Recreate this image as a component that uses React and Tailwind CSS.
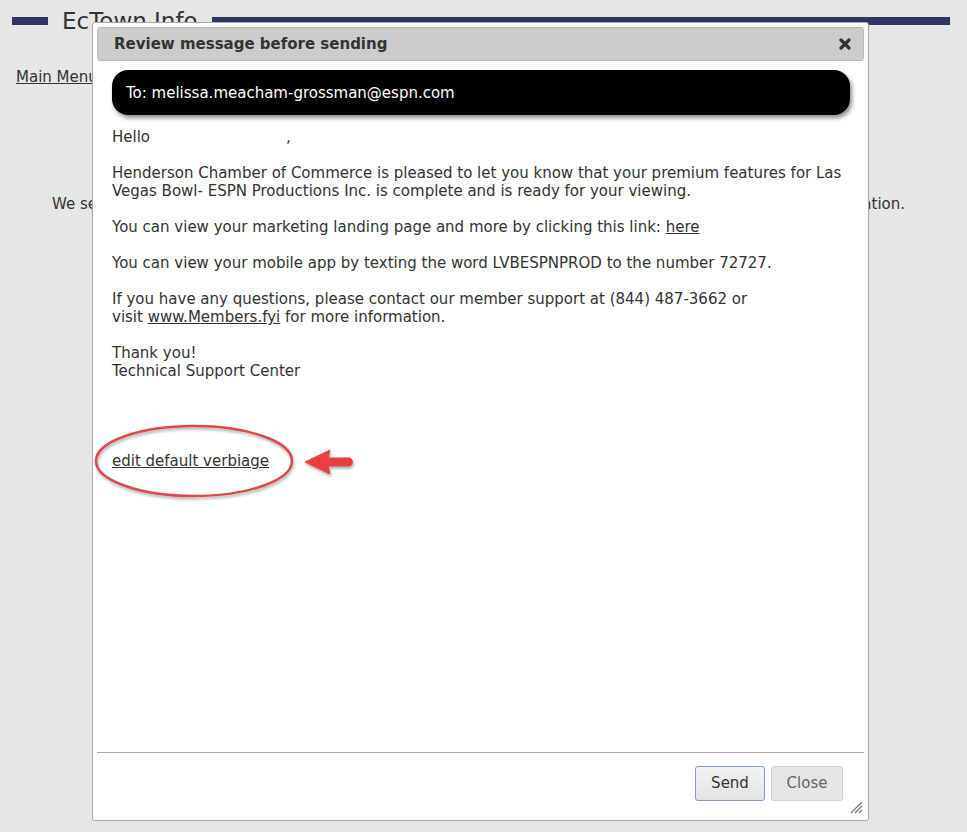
export default function App() {
  return (
    <div className="relative min-h-[832px] w-full overflow-hidden bg-[#e6e6e6] font-['DejaVu_Sans',Verdana,sans-serif] text-[#333]">
      {/* page behind the dialog */}
      <div className="flex items-center gap-[14px] pl-3 pr-[17px] pt-[9px]">
        <div className="h-2 w-9 bg-[#2f3661]" />
        <h1 className="text-[23px] leading-[24px] text-[#333]">EcTown Info</h1>
        <div className="h-2 flex-1 bg-[#2f3661]" />
      </div>
      <div className="pl-4 pt-[32px]">
        <a href="#" className="text-[15px] text-[#333] underline">Main Menu</a>
      </div>
      <p className="mt-[104px] pr-[10px] text-center text-[15px] text-[#333]">
        We send this message so the member knows their premium features are ready, so please review the notification.
      </p>

      {/* dialog */}
      <div className="absolute left-[92px] top-[22px] flex h-[799px] w-[777px] flex-col rounded-[3px] border border-[#aaa] bg-white p-1">
        <div className="flex h-[34px] items-center justify-between rounded-[3px] border border-[#bbb] bg-[#cccccc] pl-4 pr-[12px]">
          <span className="text-[15px] font-bold text-[#333]">Review message before sending</span>
          <svg width="12" height="12" viewBox="0 0 12 12">
            <path d="M2 2 L10 10 M10 2 L2 10" stroke="#333" strokeWidth="3.2" strokeLinecap="round" />
          </svg>
        </div>

        <div className="flex-1 pl-[15px] pr-[14px] pt-[9px] text-[15px] leading-[18px] text-[#333]">
          <div className="flex h-[45px] items-center rounded-[16px] bg-black px-[14px] text-white shadow-[2px_3px_4px_rgba(0,0,0,0.45)]">
            To: melissa.meacham-grossman@espn.com
          </div>
          <div className="pt-[13px]">
            <p>
              Hello<span className="inline-block w-[136px]" />,
            </p>
            <p className="mt-[18px]">
              Henderson Chamber of Commerce is pleased to let you know that your premium features for Las Vegas Bowl- ESPN Productions Inc. is complete and is ready for your viewing.
            </p>
            <p className="mt-[18px]">
              You can view your marketing landing page and more by clicking this link: <a href="#" className="underline">here</a>
            </p>
            <p className="mt-[18px]">
              You can view your mobile app by texting the word LVBESPNPROD to the number 72727.
            </p>
            <p className="mt-[18px]">
              If you have any questions, please contact our member support at (844) 487-3662 or
              <br />
              visit <a href="#" className="underline">www.Members.fyi</a> for more information.
            </p>
            <p className="mt-[18px]">
              Thank you!
              <br />
              Technical Support Center
            </p>
            <p className="mt-[72px]">
              <a href="#" className="underline">edit default verbiage</a>
            </p>
          </div>
        </div>

        <div className="relative flex justify-end gap-[6px] border-t border-[#aaa] pb-[15px] pr-[21px] pt-[13px]">
          <button className="h-[35px] w-[70px] rounded-[3px] border border-[#7d9fd3] bg-gradient-to-b from-[#f4f4f4] to-[#e2e2e2] text-[15px] text-[#333]">
            Send
          </button>
          <button className="h-[35px] w-[72px] rounded-[3px] border border-[#d3d3d3] bg-[#e6e6e6] text-[15px] text-[#666]">
            Close
          </button>
          <svg className="absolute bottom-[2px] right-[1px]" width="14" height="14" viewBox="0 0 14 14">
            <path d="M13 2 L2 13 M13 6 L6 13 M13 10 L10 13" stroke="#777" strokeWidth="1.3" />
          </svg>
        </div>
      </div>

      {/* annotation */}
      <svg className="absolute left-[88px] top-[418px]" width="280" height="90" viewBox="0 0 280 90">
        <defs>
          <filter id="sh" x="-10%" y="-20%" width="120%" height="140%">
            <feDropShadow dx="1" dy="2" stdDeviation="1.5" floodColor="#000" floodOpacity="0.35" />
          </filter>
        </defs>
        <ellipse cx="106" cy="43" rx="98" ry="35" fill="none" stroke="#dc4a4d" strokeWidth="2.5" filter="url(#sh)" />
        <path
          d="M217 44 L242 32 L240 40 L262 40 Q267 44 262 48 L240 48 L242 56 Z"
          fill="#e8413f"
          stroke="#e8413f"
          strokeWidth="1"
          strokeLinejoin="round"
          filter="url(#sh)"
        />
      </svg>
    </div>
  );
}
